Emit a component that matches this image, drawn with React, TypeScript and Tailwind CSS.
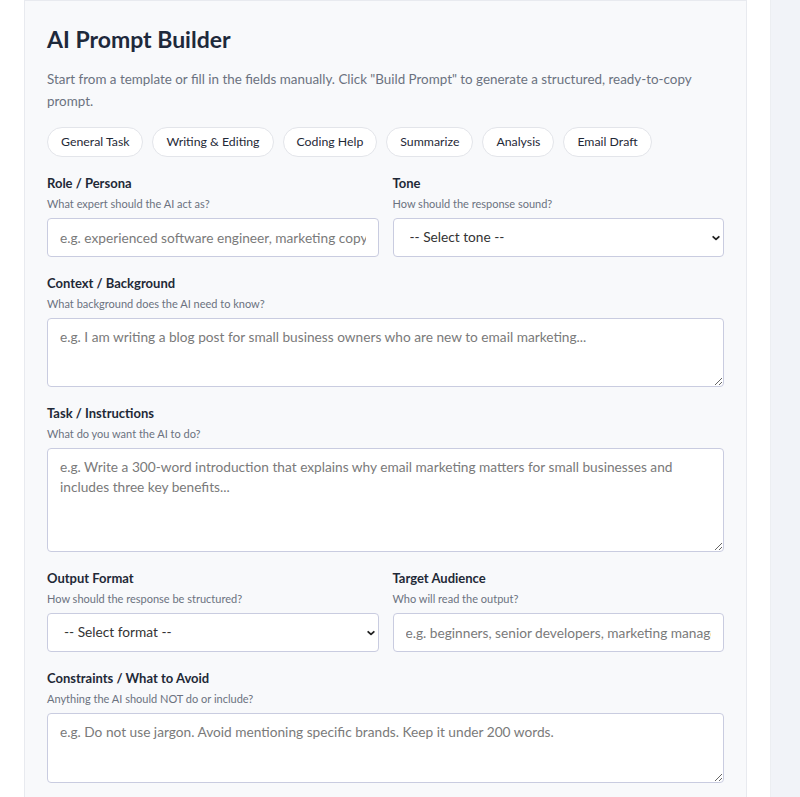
import React from "react";

const font = { fontFamily: "Lato, 'Open Sans', sans-serif" };

function Chevron() {
  return (
    <svg className="pointer-events-none absolute right-[3px] top-1/2 -translate-y-1/2" width="10" height="10" viewBox="0 0 10 10">
      <path d="M2.2 3.8 L5 6.4 L7.8 3.8" fill="none" stroke="#222" strokeWidth="1.8" strokeLinecap="round" strokeLinejoin="round" />
    </svg>
  );
}

function Field({ label, help, children }: { label: string; help: string; children: React.ReactNode }) {
  return (
    <div className="flex flex-col">
      <div className="text-[13px] font-bold leading-[18px] text-[#1f2937]">{label}</div>
      <div className="mt-[4px] text-[11px] leading-[16px] text-[#6b7280]">{help}</div>
      <div className="mt-[6px]">{children}</div>
    </div>
  );
}

const inputCls =
  "block w-full h-[39px] rounded-[4px] border border-[#c9cce0] bg-white px-[12px] text-[13.7px] text-[#333] placeholder:text-[#7a7a7a] outline-none";
const areaCls =
  "block w-full rounded-[4px] border border-[#c9cce0] bg-white px-[12px] pt-[8px] pb-[8px] text-[13.7px] leading-[20px] text-[#333] placeholder:text-[#7a7a7a] outline-none";

function Select({ text }: { text: string }) {
  return (
    <div className="relative">
      <select className={inputCls + " appearance-none pl-[16px]"} defaultValue="">
        <option value="">{text}</option>
      </select>
      <Chevron />
    </div>
  );
}

export default function App() {
  const chips = ["General Task", "Writing & Editing", "Coding Help", "Summarize", "Analysis", "Email Draft"];
  return (
    <div className="flex min-h-[797px] bg-white overflow-hidden" style={font}>
      <div className="ml-[24px] w-[723px] shrink-0 border border-[#e8eaef] bg-[#f8f9fb] px-[22px] pt-[24px] pb-[40px]">
        <h1 className="text-[23px] font-bold leading-[28px] text-[#1e293b]">AI Prompt Builder</h1>
        <p className="mt-[15px] text-[13.4px] leading-[22px] text-[#6b7280]">
          Start from a template or fill in the fields manually. Click "Build Prompt" to generate a structured, ready-to-copy prompt.
        </p>
        <div className="mt-[15px] flex gap-[9px]">
          {chips.map((c) => (
            <div
              key={c}
              className="flex h-[30px] items-center rounded-full border border-[#e3e5ea] bg-white px-[13px] text-[12.3px] text-[#1f2937]"
            >
              {c}
            </div>
          ))}
        </div>
        <div className="mt-[17px] flex flex-col gap-[17px]">
          <div className="grid grid-cols-2 gap-[14px]">
            <Field label="Role / Persona" help="What expert should the AI act as?">
              <input className={inputCls} placeholder="e.g. experienced software engineer, marketing copywriter" />
            </Field>
            <Field label="Tone" help="How should the response sound?">
              <Select text="-- Select tone --" />
            </Field>
          </div>
          <Field label="Context / Background" help="What background does the AI need to know?">
            <textarea
              className={areaCls + " h-[69px]"}
              placeholder="e.g. I am writing a blog post for small business owners who are new to email marketing..."
            />
          </Field>
          <Field label="Task / Instructions" help="What do you want the AI to do?">
            <textarea
              className={areaCls + " h-[104px]"}
              placeholder="e.g. Write a 300-word introduction that explains why email marketing matters for small businesses and includes three key benefits..."
            />
          </Field>
          <div className="grid grid-cols-2 gap-[14px]">
            <Field label="Output Format" help="How should the response be structured?">
              <Select text="-- Select format --" />
            </Field>
            <Field label="Target Audience" help="Who will read the output?">
              <input className={inputCls} placeholder="e.g. beginners, senior developers, marketing managers" />
            </Field>
          </div>
          <Field label="Constraints / What to Avoid" help="Anything the AI should NOT do or include?">
            <textarea
              className={areaCls + " h-[70px]"}
              placeholder="e.g. Do not use jargon. Avoid mentioning specific brands. Keep it under 200 words."
            />
          </Field>
        </div>
      </div>
      <div className="ml-[23px] flex-1 border-l border-[#eceef2] bg-[#f1f3f8]" />
    </div>
  );
}
